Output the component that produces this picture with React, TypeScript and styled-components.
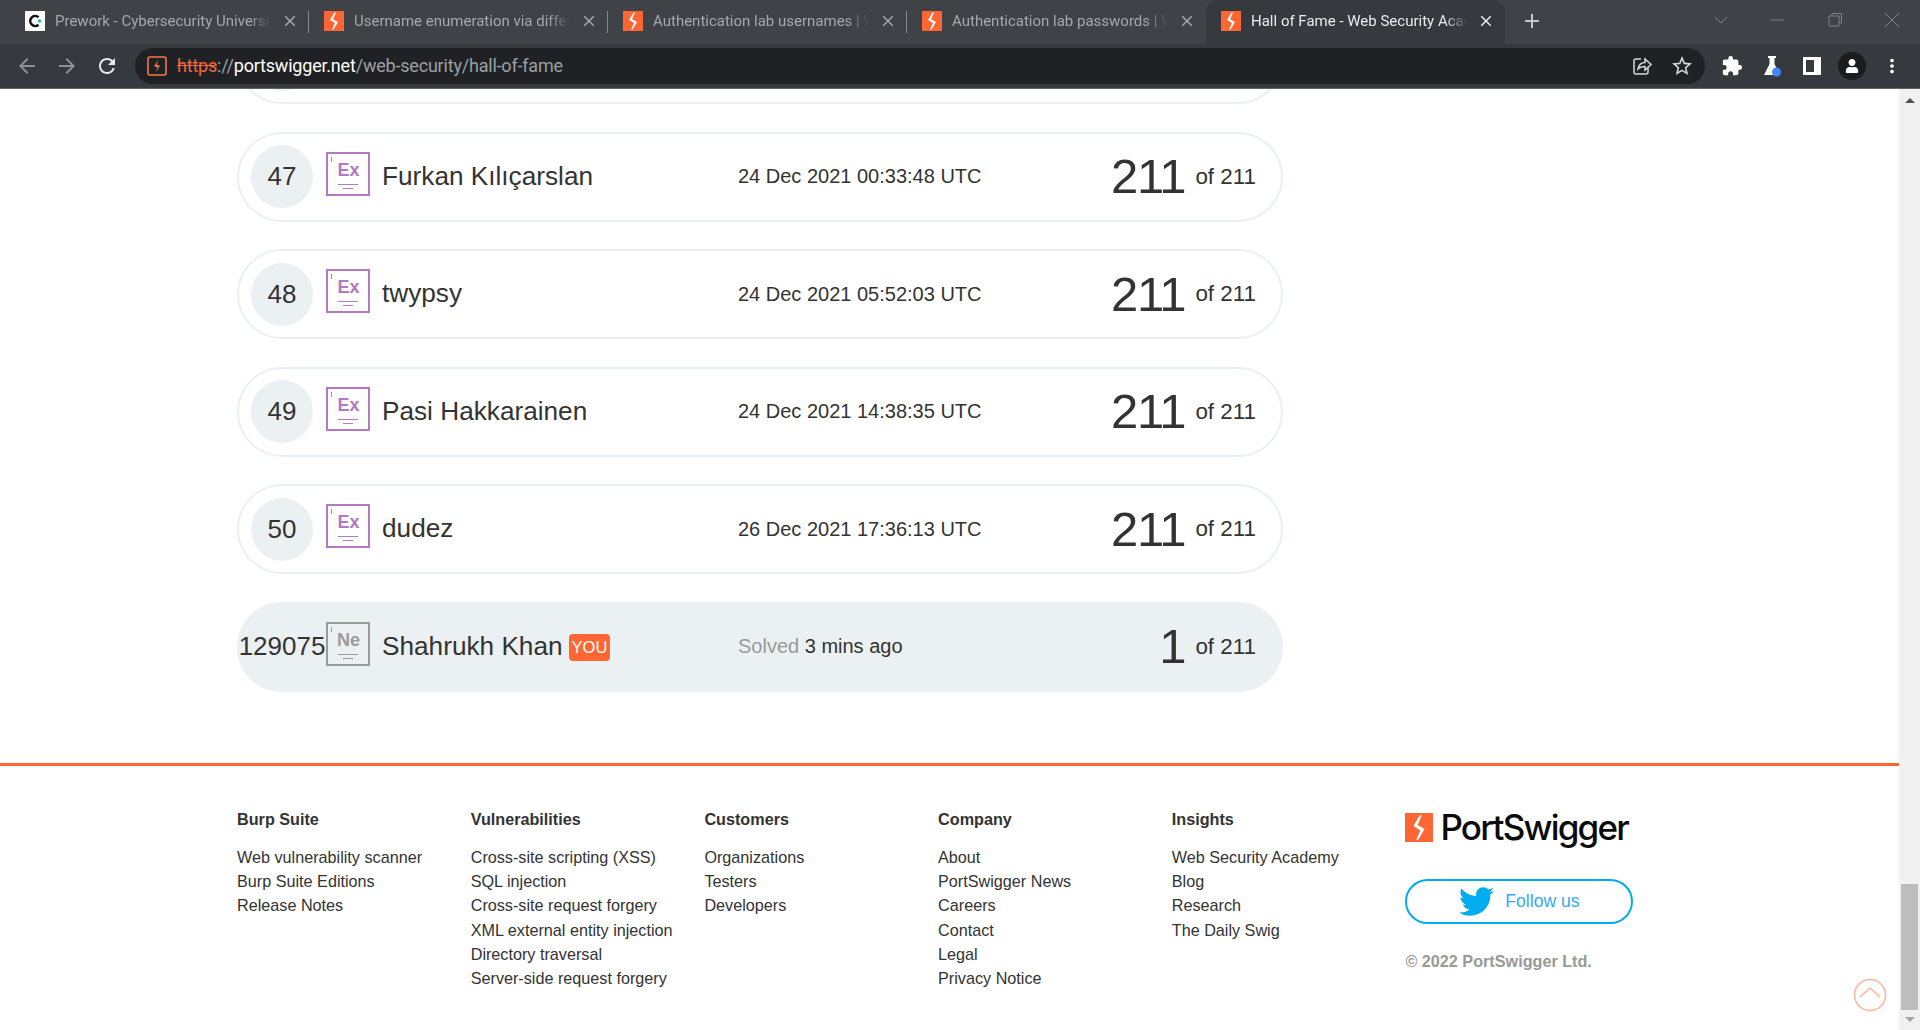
import React from 'react'
import styled, { createGlobalStyle } from 'styled-components'
import { FaTwitter, FaUser } from 'react-icons/fa'
import {
  MdAdd,
  MdArrowBack,
  MdArrowForward,
  MdClose,
  MdExtension,
  MdMoreVert,
  MdRefresh,
  MdStarBorder,
} from 'react-icons/md'

const GlobalStyle = createGlobalStyle`
  * {
    box-sizing: border-box;
  }
  html, body {
    margin: 0;
    height: 100%;
    overflow: hidden;
    background: #fff;
    font-family: "Liberation Sans", Arial, sans-serif;
  }
`

const Window = styled.div`
  width: 1920px;
  height: 1030px;
  display: flex;
  flex-direction: column;
  overflow: hidden;
`

/* browser chrome */
const TabStrip = styled.div`
  height: 44px;
  flex: none;
  background: #3f4246;
  display: flex;
  align-items: stretch;
  padding-left: 10px;
  font-family: Roboto, "Open Sans", sans-serif;
`

const Tab = styled.div<{ $active?: boolean; $last?: boolean }>`
  width: 299px;
  flex: none;
  display: flex;
  align-items: center;
  padding: 0 8px 2px 15px;
  gap: 10px;
  position: relative;
  background: ${(p) => (p.$active ? '#36393d' : 'transparent')};
  border-radius: ${(p) => (p.$active ? '12px 12px 0 0' : '0')};
  color: ${(p) => (p.$active ? '#e8eaed' : '#a4a8ad')};
  &::after {
    content: '';
    display: ${(p) => (p.$active || p.$last ? 'none' : 'block')};
    position: absolute;
    right: 0;
    top: 11px;
    height: 22px;
    width: 1px;
    background: #85888c;
  }
`

const TabTitle = styled.span`
  flex: 1;
  min-width: 0;
  font-size: 15px;
  white-space: nowrap;
  overflow: hidden;
  mask-image: linear-gradient(to right, #000 90%, transparent 100%);
`

const TabClose = styled(MdClose)`
  flex: none;
  font-size: 18px;
  margin-right: 2px;
`

const NewTab = styled(MdAdd)`
  color: #c4c7cb;
  font-size: 24px;
  align-self: center;
  margin: 0 0 2px 15px;
`

const WindowControls = styled.div`
  margin-left: auto;
  display: flex;
  align-items: center;
  height: 100%;
  padding-bottom: 4px;
`

const WindowControl = styled.svg`
  width: 57px;
  height: 16px;
  stroke: #7f8286;
  fill: none;
  stroke-width: 1;
`

const Toolbar = styled.div`
  height: 45px;
  flex: none;
  background: #36393d;
  border-bottom: 1px solid #5f6165;
  display: flex;
  align-items: center;
  padding: 0 8px 0 15px;
  font-family: Roboto, "Open Sans", sans-serif;
`

const NavButton = styled.span<{ $dim?: boolean }>`
  width: 24px;
  height: 24px;
  flex: none;
  margin-right: 16px;
  font-size: 24px;
  display: flex;
  align-items: center;
  justify-content: center;
  color: ${(p) => (p.$dim ? '#8d9095' : '#e8eaed')};
`

const Omnibox = styled.div`
  flex: 1;
  min-width: 0;
  height: 36px;
  background: #202124;
  border-radius: 18px;
  display: flex;
  align-items: center;
  padding: 0 11px 1px 12px;
  font-size: 18px;
  letter-spacing: -0.2px;
  color: #9aa0a6;
`

const SecureMark = styled.svg`
  width: 20px;
  height: 20px;
  margin-right: 10px;
  flex: none;
`

const Scheme = styled.span`
  color: #f2663a;
  text-decoration: line-through;
`

const Host = styled.span`
  color: #fff;
`

const OmniActions = styled.div`
  margin-left: auto;
  display: flex;
  align-items: center;
  gap: 17px;
  color: #d5d7da;
  font-size: 24px;
`

const ToolbarIcons = styled.div`
  display: flex;
  flex: none;
  align-items: center;
  margin-left: 7px;
  color: #fff;
`

const ToolbarIcon = styled.span`
  width: 40px;
  height: 36px;
  display: flex;
  align-items: center;
  justify-content: center;
  font-size: 22px;
`

const Avatar = styled.span`
  width: 28px;
  height: 28px;
  border-radius: 50%;
  background: #1b1c1f;
  display: flex;
  align-items: center;
  justify-content: center;
  font-size: 14px;
`

/* page */
const Viewport = styled.div`
  flex: 1;
  min-height: 0;
  display: flex;
  position: relative;
`

const Content = styled.main`
  flex: 1;
  min-width: 0;
  overflow: hidden;
  color: #333;
`

const Container = styled.div`
  width: 1425px;
  margin: 0 auto;
`

const Rows = styled.div`
  width: 1046px;
  margin-top: -75px;
  display: flex;
  flex-direction: column;
  gap: 27.5px;
`

const Row = styled.div<{ $you?: boolean }>`
  height: 90px;
  flex: none;
  border-radius: 45px;
  border: 2px solid #ebf0f3;
  background: ${(p) => (p.$you ? '#ebf0f3' : '#fff')};
  display: flex;
  align-items: center;
  padding: 0 25px 0 12px;
`

const Rank = styled.div`
  width: 62px;
  height: 63px;
  flex: none;
  border-radius: 50%;
  background: #ebf0f3;
  display: flex;
  align-items: center;
  justify-content: center;
  font-size: 26px;
  white-space: nowrap;
  color: #333;
`

const Element = styled.div<{ $color: string }>`
  width: 44px;
  height: 44px;
  flex: none;
  margin: -6px 12px 0 13px;
  border: 2px solid ${(p) => p.$color};
  color: ${(p) => p.$color};
  background: ${(p) => (p.$color === '#9b9b9b' ? 'transparent' : '#fff')};
  display: flex;
  flex-direction: column;
  align-items: center;
  position: relative;
  padding-top: 8px;
  &::before {
    content: '';
    position: absolute;
    left: 3px;
    top: 3px;
    width: 1px;
    height: 5px;
    background: ${(p) => p.$color};
  }
`

const ElementSymbol = styled.span`
  font-size: 18px;
  line-height: 17px;
  font-weight: 700;
  margin-left: 1px;
`

const ElementLine = styled.span<{ $short?: boolean }>`
  display: block;
  height: 1px;
  width: ${(p) => (p.$short ? 10 : 20)}px;
  margin-top: ${(p) => (p.$short ? 3 : 5)}px;
  background: currentColor;
`

const Name = styled.div`
  width: 356px;
  flex: none;
  font-size: 26.2px;
  display: flex;
  align-items: center;
  gap: 6px;
  white-space: nowrap;
  margin-top: -1px;
`

const YouTag = styled.span`
  background: #ff6633;
  color: #fff;
  font-size: 16.5px;
  line-height: 27px;
  height: 27px;
  padding: 0 3px;
  border-radius: 4px;
  margin-top: 2px;
`

const When = styled.div`
  font-size: 20px;
  white-space: nowrap;
`

const Solved = styled.span`
  color: #999;
`

const Score = styled.div`
  margin-left: auto;
  display: flex;
  align-items: center;
  gap: 10px;
  font-size: 22.4px;
  white-space: nowrap;
`

const ScoreValue = styled.span`
  font-size: 49px;
  letter-spacing: -1.2px;
  line-height: 1;
  color: #333;
`

const Footer = styled.footer`
  margin-top: 71px;
  border-top: 3px solid #ff6633;
  padding-top: 41px;
`

const FooterGrid = styled.div`
  display: grid;
  grid-template-columns: repeat(5, 233.7px) 1fr;
`

const FooterColumn = styled.div`
  font-size: 16.2px;
  line-height: 24.25px;
  display: flex;
  flex-direction: column;
`

const FooterHeading = styled.div`
  font-weight: 700;
  margin-bottom: 14px;
`

const FooterLink = styled.a`
  color: #333;
  text-decoration: none;
  white-space: nowrap;
`

const Brand = styled.div`
  display: flex;
  align-items: center;
  gap: 7px;
  margin-top: 6px;
  height: 29px;
`

const BrandMark = styled.svg`
  width: 28px;
  height: 29px;
  flex: none;
`

const BrandName = styled.span`
  font-family: Inter, "Liberation Sans", sans-serif;
  font-size: 35px;
  font-weight: 500;
  letter-spacing: -1.8px;
  color: #0b0b0b;
  line-height: 29px;
`

const FollowButton = styled.a`
  width: 228px;
  height: 45px;
  margin-top: 37px;
  border: 2px solid #00aeef;
  border-radius: 23px;
  display: flex;
  align-items: center;
  justify-content: center;
  gap: 11px;
  color: #36a9f0;
  font-size: 17.6px;
`

const FollowBird = styled(FaTwitter)`
  color: #00aeef;
  font-size: 35px;
`

const Copyright = styled.div`
  margin-top: 25px;
  font-weight: 700;
  color: #999;
  white-space: nowrap;
`

const BackToTop = styled.svg`
  position: absolute;
  right: 33px;
  bottom: 18px;
  width: 34px;
  height: 34px;
  fill: none;
  stroke: #ffb59c;
  stroke-width: 1.5;
`

const Scrollbar = styled.aside`
  width: 21px;
  flex: none;
  background: #f1f1f1;
  display: flex;
  flex-direction: column;
  align-items: center;
`

const ScrollArrow = styled.span<{ $down?: boolean }>`
  flex: none;
  width: 0;
  height: 0;
  border-left: 5px solid transparent;
  border-right: 5px solid transparent;
  ${(p) =>
    p.$down
      ? 'border-top: 5px solid #a3a3a3; margin: 7px 0 8px;'
      : 'border-bottom: 5px solid #505050; margin: 9px 0 0;'}
`

const ScrollThumb = styled.div`
  width: 17px;
  height: 126px;
  margin-top: auto;
  background: #bdbdbd;
`

const Burst = ({ size = 20 }: { size?: number }) => (
  <svg width={size} height={size} viewBox="0 0 20 20" style={{ flex: 'none' }}>
    <rect width="20" height="20" fill="#ff6633" />
    <path
      d="M10.5 1.5 L6 9 L11 12 L8 18.5 L9.5 18.5 L14 11 L9 8.2 L12 1.5 Z"
      fill="#fff"
    />
  </svg>
)

const CyberIcon = () => (
  <svg width={20} height={20} viewBox="0 0 20 20" style={{ flex: 'none' }}>
    <rect width="20" height="20" fill="#fff" />
    <path
      d="M13.5 6.2 A5 5 0 1 0 13.5 13.8"
      fill="none"
      stroke="#111"
      strokeWidth="2.6"
    />
    <circle cx="14.5" cy="10" r="1.8" fill="#2fbf8f" />
  </svg>
)

const tabs = [
  { title: 'Prework - Cybersecurity University', cyber: true },
  { title: 'Username enumeration via different responses' },
  { title: 'Authentication lab usernames | Web Security Academy' },
  { title: 'Authentication lab passwords | Web Security Academy' },
  { title: 'Hall of Fame - Web Security Academy', active: true },
]

const players = [
  { rank: '46', name: '', when: '' },
  { rank: '47', name: 'Furkan Kılıçarslan', when: '24 Dec 2021 00:33:48 UTC' },
  { rank: '48', name: 'twypsy', when: '24 Dec 2021 05:52:03 UTC' },
  { rank: '49', name: 'Pasi Hakkarainen', when: '24 Dec 2021 14:38:35 UTC' },
  { rank: '50', name: 'dudez', when: '26 Dec 2021 17:36:13 UTC' },
]

const footerColumns = [
  {
    heading: 'Burp Suite',
    links: ['Web vulnerability scanner', 'Burp Suite Editions', 'Release Notes'],
  },
  {
    heading: 'Vulnerabilities',
    links: [
      'Cross-site scripting (XSS)',
      'SQL injection',
      'Cross-site request forgery',
      'XML external entity injection',
      'Directory traversal',
      'Server-side request forgery',
    ],
  },
  { heading: 'Customers', links: ['Organizations', 'Testers', 'Developers'] },
  {
    heading: 'Company',
    links: ['About', 'PortSwigger News', 'Careers', 'Contact', 'Legal', 'Privacy Notice'],
  },
  {
    heading: 'Insights',
    links: ['Web Security Academy', 'Blog', 'Research', 'The Daily Swig'],
  },
]

const ElementBadge = ({ symbol, color }: { symbol: string; color: string }) => (
  <Element $color={color}>
    <ElementSymbol>{symbol}</ElementSymbol>
    <ElementLine />
    <ElementLine $short />
  </Element>
)

const App = () => {
  return (
    <Window>
      <GlobalStyle />
      <TabStrip>
        {tabs.map((tab, i) => (
          <Tab key={tab.title} $active={tab.active} $last={i === 3}>
            {tab.cyber ? <CyberIcon /> : <Burst />}
            <TabTitle>{tab.title}</TabTitle>
            <TabClose />
          </Tab>
        ))}
        <NewTab />
        <WindowControls>
          <WindowControl viewBox="0 0 57 16">
            <path d="M23 5 L29 11 L35 5" />
          </WindowControl>
          <WindowControl viewBox="0 0 57 16">
            <path d="M22 8 H35" />
          </WindowControl>
          <WindowControl viewBox="0 0 57 16">
            <path d="M23 4 H33 V14 H23 Z M26 4 V1.5 H35.5 V11 H33" />
          </WindowControl>
          <WindowControl viewBox="0 0 57 16">
            <path d="M22 1 L36 15 M36 1 L22 15" />
          </WindowControl>
        </WindowControls>
      </TabStrip>

      <Toolbar>
        <NavButton $dim>
          <MdArrowBack />
        </NavButton>
        <NavButton $dim>
          <MdArrowForward />
        </NavButton>
        <NavButton>
          <MdRefresh />
        </NavButton>
        <Omnibox>
          <SecureMark viewBox="0 0 20 20">
            <rect x="1" y="1" width="18" height="18" rx="2" fill="none" stroke="#f2784b" strokeWidth="1.6" />
            <path d="M11 4 L7 10.5 L10.5 11 L9 16 L13 9.5 L9.8 9 Z" fill="#f2784b" />
          </SecureMark>
          <span>
            <Scheme>https</Scheme>://<Host>portswigger.net</Host>/web-security/hall-of-fame
          </span>
          <OmniActions>
            <svg width="22" height="22" viewBox="0 0 22 22" fill="none" stroke="currentColor" strokeWidth="1.5">
              <path d="M10 4 H5 A2 2 0 0 0 3 6 V17 A2 2 0 0 0 5 19 H15 A2 2 0 0 0 17 17 V13" />
              <path d="M7 14 C8 9 11 7.5 14 7.5 V4 L20 9.5 L14 15 V11.5 C11 11.5 9 12 7 14 Z" />
            </svg>
            <MdStarBorder />
          </OmniActions>
        </Omnibox>
        <ToolbarIcons>
          <ToolbarIcon>
            <MdExtension />
          </ToolbarIcon>
          <ToolbarIcon>
            <svg width="20" height="22" viewBox="0 0 20 22">
              <path d="M6 1 H14 V3 H12.5 V9 L18 20 H2 L7.5 9 V3 H6 Z" fill="#fff" />
              <circle cx="14.5" cy="17" r="4.5" fill="#4285f4" />
            </svg>
          </ToolbarIcon>
          <ToolbarIcon>
            <svg width="18" height="18" viewBox="0 0 18 18">
              <path d="M0 0 H18 V18 H0 Z M3 3 V15 H11 V3 Z" fill="#fff" fillRule="evenodd" />
            </svg>
          </ToolbarIcon>
          <ToolbarIcon>
            <Avatar>
              <FaUser />
            </Avatar>
          </ToolbarIcon>
          <ToolbarIcon>
            <MdMoreVert />
          </ToolbarIcon>
        </ToolbarIcons>
      </Toolbar>

      <Viewport>
        <Content>
          <Container>
            <Rows>
              {players.map((p) => (
                <Row key={p.rank}>
                  <Rank>{p.rank}</Rank>
                  <ElementBadge symbol="Ex" color="#b578c2" />
                  <Name>{p.name}</Name>
                  <When>{p.when}</When>
                  <Score>
                    <ScoreValue>211</ScoreValue> of 211
                  </Score>
                </Row>
              ))}
              <Row $you>
                <Rank>129075</Rank>
                <ElementBadge symbol="Ne" color="#9b9b9b" />
                <Name>
                  Shahrukh Khan <YouTag>YOU</YouTag>
                </Name>
                <When>
                  <Solved>Solved</Solved> 3 mins ago
                </When>
                <Score>
                  <ScoreValue>1</ScoreValue> of 211
                </Score>
              </Row>
            </Rows>
          </Container>

          <Footer>
            <Container>
              <FooterGrid>
                {footerColumns.map((col) => (
                  <FooterColumn key={col.heading}>
                    <FooterHeading>{col.heading}</FooterHeading>
                    {col.links.map((link) => (
                      <FooterLink key={link}>{link}</FooterLink>
                    ))}
                  </FooterColumn>
                ))}
                <FooterColumn>
                  <Brand>
                    <BrandMark viewBox="0 0 20 20" preserveAspectRatio="none">
                      <rect width="20" height="20" fill="#ff6633" />
                      <path d="M10.5 1.5 L6 9 L11 12 L8 18.5 L9.5 18.5 L14 11 L9 8.2 L12 1.5 Z" fill="#fff" />
                    </BrandMark>
                    <BrandName>PortSwigger</BrandName>
                  </Brand>
                  <FollowButton>
                    <FollowBird />
                    Follow us
                  </FollowButton>
                  <Copyright>© 2022 PortSwigger Ltd.</Copyright>
                </FooterColumn>
              </FooterGrid>
            </Container>
          </Footer>
        </Content>

        <BackToTop viewBox="0 0 34 34">
          <circle cx="17" cy="17" r="15.5" />
          <path d="M7 19 L17 10 L27 19" />
        </BackToTop>

        <Scrollbar>
          <ScrollArrow />
          <ScrollThumb />
          <ScrollArrow $down />
        </Scrollbar>
      </Viewport>
    </Window>
  )
}

export default App
